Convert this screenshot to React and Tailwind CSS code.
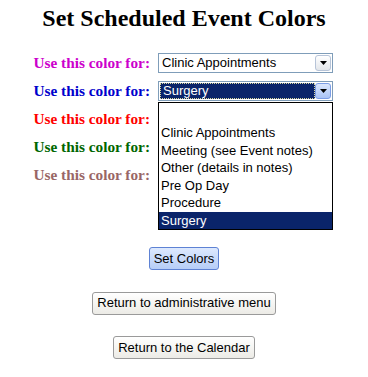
import React from 'react';

const rows = [
  { color: 'text-[#cc00cc]', value: 'Clinic Appointments' },
  { color: 'text-[#0000cc]', value: 'Surgery', open: true },
  // these three sit under the open list, so their values don't show
  { color: 'text-[#ff0000]', value: '' },
  { color: 'text-[#006600]', value: '' },
  { color: 'text-[#996666]', value: '' },
];

const options = [
  'Clinic Appointments',
  'Meeting (see Event notes)',
  'Other (details in notes)',
  'Pre Op Day',
  'Procedure',
  'Surgery',
];

const Arrow = ({ active }) => (
  <div
    className={
      'w-[16px] h-[16px] shrink-0 rounded-[3px] border flex items-center justify-center ' +
      (active
        ? 'border-[#7c9ee6] bg-gradient-to-b from-[#dbe7fd] to-[#a9c3f5]'
        : 'border-[#b7c4d8] bg-gradient-to-b from-white to-[#e3e6ea]')
    }
  >
    <svg width="7" height="4" viewBox="0 0 7 4">
      <path d="M0 0h7L3.5 4z" fill="#000" />
    </svg>
  </div>
);

const Select = ({ value, open }) => (
  <div className="relative w-[175px]">
    <div className="h-[20px] border border-[#7f9db9] bg-white flex items-center p-[1px]">
      <div
        className={
          'flex-1 h-full flex items-center pl-[2px] ' +
          (open ? 'bg-[#0a246a] text-white border border-dotted border-[#d8d8a0]' : 'text-black')
        }
      >
        {value}
      </div>
      <Arrow active={open} />
    </div>
    {open && (
      <div className="absolute left-0 top-[21px] w-[175px] border border-black bg-white z-10">
        <div className="h-[21px]" />
        {options.map((o) => (
          <div
            key={o}
            className={
              'h-[17.5px] leading-[17.5px] pl-[2px] ' +
              (o === value ? 'bg-[#0a246a] text-white' : 'text-black')
            }
          >
            {o}
          </div>
        ))}
      </div>
    )}
  </div>
);

const Btn = ({ children, blue }) => (
  <button
    className={
      'px-[4px] rounded-[3px] border text-[13px] text-black ' +
      (blue
        ? 'h-[23px] border-[#5e82d4] bg-gradient-to-b from-[#dde9fe] to-[#b6cdf7]'
        : 'h-[23px] border-[#9a9a9a] bg-gradient-to-b from-white to-[#ecebe6]')
    }
  >
    {children}
  </button>
);

export default function App() {
  return (
    <div className="w-[368px] h-[377px] bg-white overflow-hidden font-['Liberation_Serif',serif]">
      <h1 className="pt-[4px] text-center text-[24px] leading-[28px] font-bold text-black">
        Set Scheduled Event Colors
      </h1>

      <div className="mt-[17px] ml-[33px] w-fit font-['Liberation_Sans',Arial,sans-serif] text-[13px]">
        {rows.map((r, i) => (
          <div key={i} className="h-[28px] flex items-center gap-[8px]">
            <span
              className={
                'w-[117px] text-right whitespace-nowrap font-bold text-[15.3px] font-[\'Liberation_Serif\',serif] ' +
                r.color
              }
            >
              Use this color for:
            </span>
            <Select value={r.value} open={r.open} />
          </div>
        ))}
      </div>

      <div className="flex flex-col items-center font-['Liberation_Sans',Arial,sans-serif]">
        <div className="mt-[57px]">
          <Btn blue>Set Colors</Btn>
        </div>
        <div className="mt-[20px]">
          <Btn>Return to administrative menu</Btn>
        </div>
        <div className="mt-[20px]">
          <Btn>Return to the Calendar</Btn>
        </div>
      </div>
    </div>
  );
}
